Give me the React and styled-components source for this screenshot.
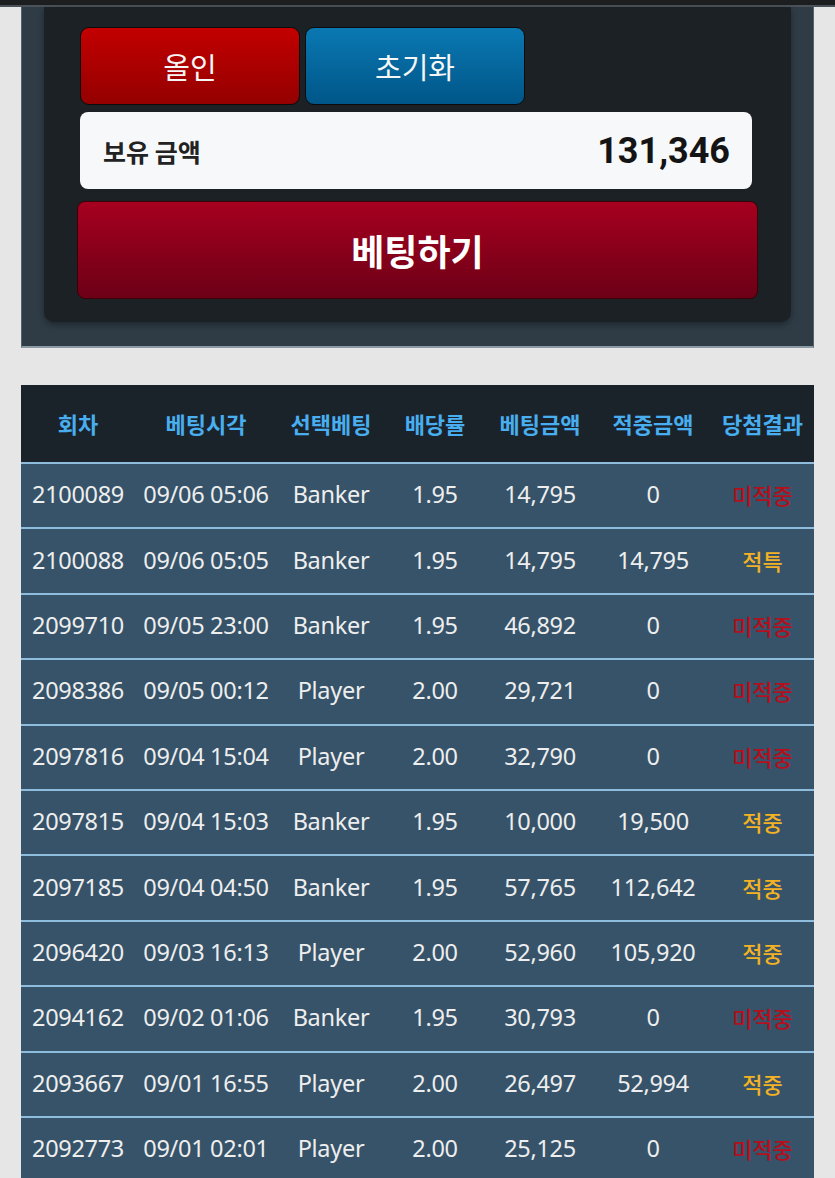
import React from 'react';
import styled, { createGlobalStyle } from 'styled-components';

const GlobalStyle = createGlobalStyle`
  html, body {
    margin: 0;
    padding: 0;
    background: #e6e6e6;
    font-family: 'Noto Sans', 'Noto Sans CJK KR', sans-serif;
  }
`;

const TopBar = styled.div`
  height: 5px;
  background: #1d1e20;
  border-bottom: 2px solid #4a5158;
`;

const Page = styled.div`
  padding: 0 21px;
`;

const BetPanel = styled.div`
  background: #2f3c46;
  border-left: 1px solid #56636d;
  border-right: 1px solid #56636d;
  border-bottom: 2px solid #8c9aa3;
  padding: 0 22px 24px 22px;
`;

const Card = styled.div`
  background: #1c2125;
  border-radius: 0 0 10px 10px;
  box-shadow: 0 3px 6px rgba(0, 0, 0, 0.35);
  padding: 20px 36px 23px 36px;
  display: flex;
  flex-direction: column;
`;

const ButtonRow = styled.div`
  display: flex;
  gap: 5px;
`;

const SmallButton = styled.div`
  width: 220px;
  height: 78px;
  box-sizing: border-box;
  border: 1.5px solid #0b0b0c;
  border-radius: 9px;
  display: flex;
  align-items: center;
  justify-content: center;
  color: #f6f6f6;
  font-size: 29px;
  font-family: 'Noto Sans CJK KR', sans-serif;
  background: ${p => p.$tone === 'red'
    ? 'linear-gradient(#c20000, #940000)'
    : 'linear-gradient(#0a78b2, #005688)'};
`;

const Balance = styled.div`
  margin-top: 7px;
  height: 77px;
  width: 672px;
  box-sizing: border-box;
  background: #f7f8fa;
  border-radius: 8px;
  display: flex;
  align-items: center;
  justify-content: space-between;
  padding: 0 22px 0 23px;
`;

const BalanceLabel = styled.span`
  font-family: 'Noto Sans CJK KR', sans-serif;
  font-weight: 700;
  font-size: 25px;
  color: #222;
`;

const BalanceValue = styled.span`
  font-family: Roboto, 'Noto Sans', sans-serif;
  font-weight: 700;
  font-size: 36px;
  color: #141414;
`;

const BetButton = styled.div`
  margin: 12px -3px 0 -3px;
  height: 98px;
  box-sizing: border-box;
  border: 1px solid #3c0008;
  border-radius: 8px;
  background: linear-gradient(#a6001f, #6c0016);
  display: flex;
  align-items: center;
  justify-content: center;
  color: #fff;
  font-family: 'Noto Sans CJK KR', sans-serif;
  font-weight: 700;
  font-size: 36px;
`;

const Table = styled.div`
  margin-top: 37px;
`;

const cols = '114px 142px 108px 100px 110px 116px 103px';

const HeadRow = styled.div`
  display: grid;
  grid-template-columns: ${cols};
  height: 77px;
  background: #1b232a;
  align-items: center;
`;

const HeadCell = styled.div`
  text-align: center;
  color: #48aef0;
  font-family: 'Noto Sans CJK KR', sans-serif;
  font-weight: 700;
  font-size: 22px;
  white-space: nowrap;
  padding-bottom: 2px;
`;

const Row = styled.div`
  display: grid;
  grid-template-columns: ${cols};
  height: 65.4px;
  box-sizing: border-box;
  border-top: 2px solid #8dbcdc;
  background: #365369;
  align-items: center;
  padding-bottom: 3px;
`;

const Cell = styled.div`
  text-align: center;
  color: #eeeeee;
  font-size: 23.5px;
  white-space: nowrap;
  letter-spacing: -0.3px;
`;

const Result = styled(Cell)`
  font-family: 'Noto Sans CJK KR', sans-serif;
  font-size: 22px;
  font-weight: 500;
  letter-spacing: 0;
  color: ${p => (p.$hit ? '#f2b224' : '#b30f1c')};
`;

const headers = ['회차', '베팅시각', '선택베팅', '배당률', '베팅금액', '적중금액', '당첨결과'];

const rows = [
  ['2100089', '09/06 05:06', 'Banker', '1.95', '14,795', '0', '미적중'],
  ['2100088', '09/06 05:05', 'Banker', '1.95', '14,795', '14,795', '적특'],
  ['2099710', '09/05 23:00', 'Banker', '1.95', '46,892', '0', '미적중'],
  ['2098386', '09/05 00:12', 'Player', '2.00', '29,721', '0', '미적중'],
  ['2097816', '09/04 15:04', 'Player', '2.00', '32,790', '0', '미적중'],
  ['2097815', '09/04 15:03', 'Banker', '1.95', '10,000', '19,500', '적중'],
  ['2097185', '09/04 04:50', 'Banker', '1.95', '57,765', '112,642', '적중'],
  ['2096420', '09/03 16:13', 'Player', '2.00', '52,960', '105,920', '적중'],
  ['2094162', '09/02 01:06', 'Banker', '1.95', '30,793', '0', '미적중'],
  ['2093667', '09/01 16:55', 'Player', '2.00', '26,497', '52,994', '적중'],
  ['2092773', '09/01 02:01', 'Player', '2.00', '25,125', '0', '미적중'],
];

export default function App() {
  return (
    <>
      <GlobalStyle />
      <TopBar />
      <Page>
        <BetPanel>
          <Card>
            <ButtonRow>
              <SmallButton $tone="red">올인</SmallButton>
              <SmallButton $tone="blue">초기화</SmallButton>
            </ButtonRow>
            <Balance>
              <BalanceLabel>보유 금액</BalanceLabel>
              <BalanceValue>131,346</BalanceValue>
            </Balance>
            <BetButton>베팅하기</BetButton>
          </Card>
        </BetPanel>

        <Table>
          <HeadRow>
            {headers.map(h => <HeadCell key={h}>{h}</HeadCell>)}
          </HeadRow>
          {rows.map(r => (
            <Row key={r[0]}>
              {r.slice(0, 6).map((v, i) => <Cell key={i}>{v}</Cell>)}
              <Result $hit={r[6] !== '미적중'}>{r[6]}</Result>
            </Row>
          ))}
        </Table>
      </Page>
    </>
  );
}
